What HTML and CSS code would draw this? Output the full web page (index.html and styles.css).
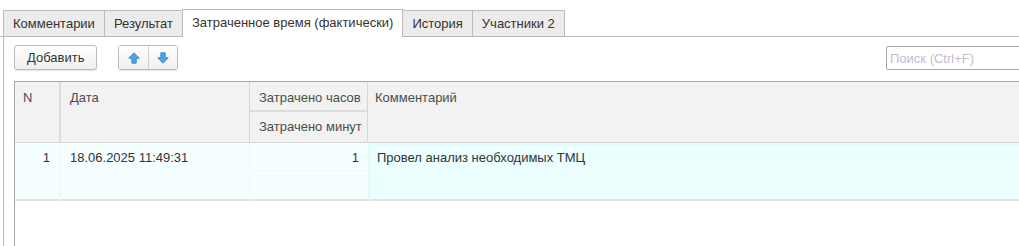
FILE: index.html
```html
<!DOCTYPE html>
<html lang="ru">
<head>
<meta charset="utf-8">
<title>Затраченное время</title>
<link rel="stylesheet" href="styles.css">
</head>
<body>
<div class="page">
  <div class="tabs">
    <div class="tab">Комментарии</div>
    <div class="tab">Результат</div>
    <div class="tab active">Затраченное время (фактически)</div>
    <div class="tab">История</div>
    <div class="tab">Участники 2</div>
  </div>
  <div class="panel">
    <div class="toolbar">
      <button class="btn">Добавить</button>
      <div class="btn-group">
        <button class="btn icon-btn" aria-label="Вверх">
          <svg width="12" height="12" viewBox="0 0 12 12"><path d="M6 0.8 L11.2 6.2 H8.2 V11.2 H3.8 V6.2 H0.8 Z" fill="#4aa6e6" stroke="#2b7fc2" stroke-width="0.8" stroke-linejoin="round"/></svg>
        </button>
        <button class="btn icon-btn" aria-label="Вниз">
          <svg width="12" height="12" viewBox="0 0 12 12"><path d="M6 11.2 L11.2 5.8 H8.2 V0.8 H3.8 V5.8 H0.8 Z" fill="#4aa6e6" stroke="#2b7fc2" stroke-width="0.8" stroke-linejoin="round"/></svg>
        </button>
      </div>
      <input class="search" type="text" placeholder="Поиск (Ctrl+F)">
    </div>
    <div class="grid">
      <div class="h c-n">N</div>
      <div class="h c-date">Дата</div>
      <div class="h c-hours">Затрачено часов</div>
      <div class="h c-comment">Комментарий</div>
      <div class="h c-min">Затрачено минут</div>

      <div class="d c-n num">1</div>
      <div class="d c-date">18.06.2025 11:49:31</div>
      <div class="d c-hours num">1</div>
      <div class="d c-comment selected">Провел анализ необходимых ТМЦ</div>
      <div class="d c-min"></div>
      <div class="rest"></div>
    </div>
  </div>
</div>
</body>
</html>
```
FILE: styles.css
```css
html, body {
  margin: 0;
  padding: 0;
  overflow: hidden;
  background: #fff;
}
body {
  font-family: "Liberation Sans", Arial, sans-serif;
  font-size: 13px;
  color: #333;
}
.page {
  width: 1040px;
  height: 246px;
  padding-top: 9px;
  box-sizing: border-box;
  display: flex;
  flex-direction: column;
}
.tabs {
  display: flex;
  align-items: flex-end;
  padding-left: 3px;
  height: 28px;
  border-bottom: 1px solid #b9b9b9;
  box-sizing: border-box;
}
.tab {
  height: 26px;
  line-height: 25px;
  padding: 0 9px;
  background: #ececec;
  border: 1px solid #bcbcbc;
  border-bottom: none;
  margin-right: -1px;
  box-sizing: border-box;
  color: #333;
  white-space: nowrap;
}
.tab.active {
  height: 28px;
  line-height: 26px;
  background: #fff;
  margin-bottom: -1px;
  padding: 0 9px;
  position: relative;
  z-index: 1;
}
.panel {
  flex: 1;
  margin-left: 3px;
  border-left: 1px solid #bcbcbc;
  padding: 8px 0 0 10px;
  display: flex;
  flex-direction: column;
}
.toolbar {
  display: flex;
  align-items: center;
  height: 25px;
  width: 1016px;
}
.btn {
  font-family: inherit;
  font-size: 13px;
  color: #333;
  height: 25px;
  padding: 0 12px;
  border: 1px solid #bdbdbd;
  border-radius: 3px;
  background: linear-gradient(#ffffff, #f0f0f0);
  box-shadow: 0 1px 1px rgba(0,0,0,0.12);
  box-sizing: border-box;
  margin: 0;
}
.btn-group {
  display: flex;
  margin-left: 21px;
  border: 1px solid #bdbdbd;
  border-radius: 3px;
  box-shadow: 0 1px 1px rgba(0,0,0,0.12);
  height: 25px;
  box-sizing: border-box;
  overflow: hidden;
}
.icon-btn {
  border: none;
  border-radius: 0;
  box-shadow: none;
  height: 23px;
  width: 29px;
  padding: 0;
  display: flex;
  align-items: center;
  justify-content: center;
}
.icon-btn + .icon-btn {
  border-left: 1px solid #cfcfcf;
}
.search {
  margin-left: auto;
  width: 144px;
  height: 24px;
  box-sizing: border-box;
  border: 1px solid #a8a8a8;
  border-radius: 2px;
  padding: 0 3px;
  font-family: inherit;
  font-size: 13px;
  color: #333;
  margin-top: 1px;
}
.search::placeholder {
  color: #c4bccc;
}
.grid {
  margin-top: 11px;
  width: 1016px;
  flex: 1;
  display: grid;
  grid-template-columns: 46px 189px 118px 1fr;
  grid-template-rows: 30px 31px 28px 30px 1fr;
  border-top: 1px solid #a6a6a6;
  border-left: 1px solid #a6a6a6;
  box-sizing: border-box;
}
.h {
  background: #f2f2f2;
  color: #4d4d4d;
  padding: 8px 9px 0;
  box-sizing: border-box;
  white-space: nowrap;
  border-bottom: 1px solid #d6d6d6;
}
.h.c-n { grid-row: 1 / 3; grid-column: 1; border-right: 2px solid #dcdcdc; padding-left: 8px; }
.h.c-date { grid-row: 1 / 3; grid-column: 2; border-right: 1px solid #d6d6d6; }
.h.c-hours { grid-row: 1; grid-column: 3; border-bottom: 2px solid #dcdcdc; border-right: 1px solid #d6d6d6; }
.h.c-min { grid-row: 2; grid-column: 3; border-right: 1px solid #d6d6d6; padding-top: 7px; }
.h.c-comment { grid-row: 1 / 3; grid-column: 4; padding-left: 7px; }
.d {
  background: #f5ffff;
  padding: 7px 9px 0;
  box-sizing: border-box;
  white-space: nowrap;
  color: #333;
}
.d.num { text-align: right; }
.d.c-n { grid-row: 3 / 5; grid-column: 1; border-right: 2px solid #eefafa; padding-right: 9px; }
.d.c-date { grid-row: 3 / 5; grid-column: 2; border-right: 1px solid #eefafa; }
.d.c-hours { grid-row: 3; grid-column: 3; border-bottom: 1px solid #eef9f9; padding-right: 9px; }
.d.c-min { grid-row: 4; grid-column: 3; }
.d.c-comment { grid-row: 3 / 5; grid-column: 4; }
.d.selected {
  background: #ebffff;
  border: 2px solid #e2fafa;
  padding: 5px 7px 0;
}
.d.c-n, .d.c-date, .d.c-min, .d.c-comment { border-bottom: 2px solid #e2e2e2; }
.rest {
  grid-column: 1 / 5;
  grid-row: 5;
}
```
